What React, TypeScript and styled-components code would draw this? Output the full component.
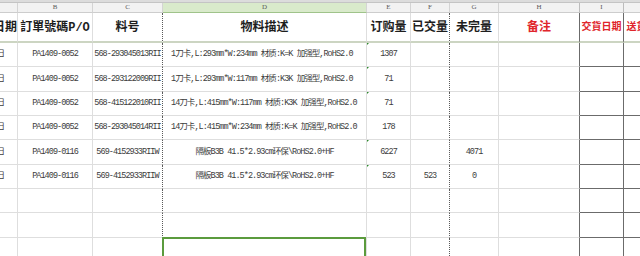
import React from "react";
import styled, { createGlobalStyle, css } from "styled-components";

const GlobalStyle = createGlobalStyle`
  html, body { margin: 0; padding: 0; background: #ffffff; }
  #root { width: 640px; height: 256px; }
`;

const COLS = [18, 75, 70, 204, 44, 39, 49, 81, 44, 46];
const ROWS = [10, 30, 24, 25, 24, 24, 25, 24, 24, 25, 24];

const GRID = "#dedede";
const DARK = "#6b6b6b";

const Sheet = styled.div`
  width: 640px;
  height: 256px;
  overflow: hidden;
  background: #ffffff;
  display: flex;
  flex-direction: column;
`;

const TopStrip = styled.div`
  height: 2px;
  flex: none;
  background: #dcdcdc;
  border-bottom: 1px solid #c4c4c4;
`;

const Grid = styled.div`
  display: grid;
  grid-template-columns: ${COLS.map((c) => `${c}px`).join(" ")};
  grid-template-rows: ${ROWS.map((r) => `${r}px`).join(" ")};
  width: ${COLS.reduce((a, b) => a + b, 0)}px;
`;

type Edge = "light" | "dark" | "break";

const rightBorder = (e: Edge) =>
  e === "dark"
    ? css`border-right: 1px solid ${DARK};`
    : e === "break"
    ? css`border-right: 1px dotted #5a5a5a;`
    : css`border-right: 1px solid ${GRID};`;

const LetterCell = styled.div<{ $active?: boolean; $edge: Edge }>`
  box-sizing: border-box;
  display: flex;
  align-items: center;
  justify-content: center;
  background: ${(p) => (p.$active ? "#d9eacb" : "#f2f2f2")};
  border-right: 1px solid ${(p) => (p.$edge === "dark" ? "#bcbcbc" : "#d4d4d4")};
  border-bottom: 1px solid ${(p) => (p.$active ? "#9fc38a" : "#cdcdcd")};
  font-family: "Liberation Serif", serif;
  font-size: 7px;
  color: #5a5a5a;
  line-height: 1;
`;

const HeadCell = styled.div<{
  $edge: Edge;
  $red?: boolean;
  $size?: number;
  $justify?: string;
}>`
  box-sizing: border-box;
  display: flex;
  align-items: center;
  justify-content: ${(p) => p.$justify || "center"};
  overflow: hidden;
  white-space: nowrap;
  padding-top: 2px;
  ${(p) => rightBorder(p.$edge)}
  border-bottom: 2px solid #ccd5c2;
  font-family: "Liberation Mono", "Noto Sans CJK SC", monospace;
  font-size: ${(p) => p.$size || 12}px;
  font-weight: ${(p) => (p.$red ? 700 : 600)};
  color: ${(p) => (p.$red ? "#e0252b" : "#1e1e1e")};
  line-height: 1;
`;

const DataCell = styled.div<{
  $edge: Edge;
  $darkBottom?: boolean;
  $justify?: string;
  $pad?: number;
  $flag?: boolean;
  $selected?: boolean;
}>`
  position: relative;
  box-sizing: border-box;
  display: flex;
  align-items: center;
  justify-content: ${(p) => p.$justify || "center"};
  padding: 0 ${(p) => (p.$justify === "flex-end" ? p.$pad ?? 0 : 0)}px 0
    ${(p) => (p.$justify === "flex-start" ? p.$pad ?? 0 : 0)}px;
  overflow: ${(p) => (p.$selected ? "visible" : "hidden")};
  white-space: nowrap;
  ${(p) => rightBorder(p.$edge)}
  border-bottom: 1px solid ${(p) => (p.$darkBottom ? DARK : GRID)};
  font-family: "Liberation Mono", "Noto Sans CJK SC", monospace;
  font-size: 8.5px;
  letter-spacing: -0.95px;
  color: #3c3c3c;
  line-height: 1;

  ${(p) =>
    p.$flag &&
    css`
      &::before {
        content: "";
        position: absolute;
        top: 0;
        left: -1px;
        width: 0;
        height: 0;
        border-top: 3px solid #2e8b2e;
        border-right: 3px solid transparent;
      }
    `}

  ${(p) =>
    p.$selected &&
    css`
      &::after {
        content: "";
        position: absolute;
        top: -1px;
        left: -1px;
        right: 0;
        bottom: -20px;
        border: 2px solid #5b9b3d;
        pointer-events: none;
      }
    `}
`;

const LETTERS = ["", "B", "C", "D", "E", "F", "G", "H", "I", ""];

const edgeFor = (i: number): Edge =>
  i === 2 || i === 5 ? "break" : i === 7 || i === 8 ? "dark" : "light";

const DESC1 = "1刀卡,L:293mm*W:234mm  材质:K=K 加强型,RoHS2.0";
const DESC2 = "1刀卡,L:293mm*W:117mm  材质:K3K 加强型,RoHS2.0";
const DESC3 = "14刀卡,L:415mm*W:117mm 材质:K3K 加强型,RoHS2.0";
const DESC4 = "14刀卡,L:415mm*W:234mm 材质:K=K 加强型,RoHS2.0";
const DESC5 = "隔板B3B 41.5*2.93cm环保\\RoHS2.0+HF";

type Row = {
  a: string;
  b: string;
  c: string;
  d: string;
  dCenter?: boolean;
  e: string;
  flag?: boolean;
  f: string;
  g: string;
};

const DATA: Row[] = [
  { a: "9月15日", b: "PA1409-0052", c: "568-293045013RII", d: DESC1, e: "1307", flag: true, f: "", g: "" },
  { a: "9月15日", b: "PA1409-0052", c: "568-293122009RII", d: DESC2, e: "71", flag: true, f: "", g: "" },
  { a: "9月15日", b: "PA1409-0052", c: "568-415122010RII", d: DESC3, e: "71", flag: true, f: "", g: "" },
  { a: "9月15日", b: "PA1409-0052", c: "568-293045014RII", d: DESC4, e: "178", f: "", g: "" },
  { a: "9月15日", b: "PA1409-0116", c: "569-4152933RIIW", d: DESC5, dCenter: true, e: "6227", flag: true, f: "", g: "4071" },
  { a: "9月15日", b: "PA1409-0116", c: "569-4152933RIIW", d: DESC5, dCenter: true, e: "523", flag: true, f: "523", g: "0" },
];

const EMPTY: Row = { a: "", b: "", c: "", d: "", e: "", f: "", g: "" };

export default function App() {
  const rows = [...DATA, EMPTY, EMPTY, EMPTY];
  return (
    <>
      <GlobalStyle />
      <Sheet>
        <TopStrip />
        <Grid>
          {LETTERS.map((l, i) => (
            <LetterCell key={`l${i}`} $active={i === 3} $edge={edgeFor(i)}>
              {l}
            </LetterCell>
          ))}

          <HeadCell $edge="light" $justify="flex-end">日期</HeadCell>
          <HeadCell $edge="light">訂單號碼P/O</HeadCell>
          <HeadCell $edge="break">料号</HeadCell>
          <HeadCell $edge="light">物料描述</HeadCell>
          <HeadCell $edge="light">订购量</HeadCell>
          <HeadCell $edge="break">已交量</HeadCell>
          <HeadCell $edge="light">未完量</HeadCell>
          <HeadCell $edge="dark" $red>备注</HeadCell>
          <HeadCell $edge="dark" $red $size={10}>交貨日期</HeadCell>
          <HeadCell $edge="light" $red $size={10}>送貨日期</HeadCell>

          {rows.map((r, ri) => {
            const last = ri === rows.length - 1;
            return (
              <React.Fragment key={`r${ri}`}>
                <DataCell $edge="light" $justify="flex-end" $pad={13}>{r.a}</DataCell>
                <DataCell $edge="light">{r.b}</DataCell>
                <DataCell $edge="break">{r.c}</DataCell>
                <DataCell
                  $edge="light"
                  $justify={r.dCenter || !r.d ? "center" : "flex-start"}
                  $pad={8}
                  $selected={last}
                >
                  {r.d}
                </DataCell>
                <DataCell $edge="light" $flag={r.flag}>{r.e}</DataCell>
                <DataCell $edge="break">{r.f}</DataCell>
                <DataCell $edge="light">{r.g}</DataCell>
                <DataCell $edge="dark" />
                <DataCell $edge="dark" $darkBottom />
                <DataCell $edge="light" $darkBottom />
              </React.Fragment>
            );
          })}
        </Grid>
      </Sheet>
    </>
  );
}
